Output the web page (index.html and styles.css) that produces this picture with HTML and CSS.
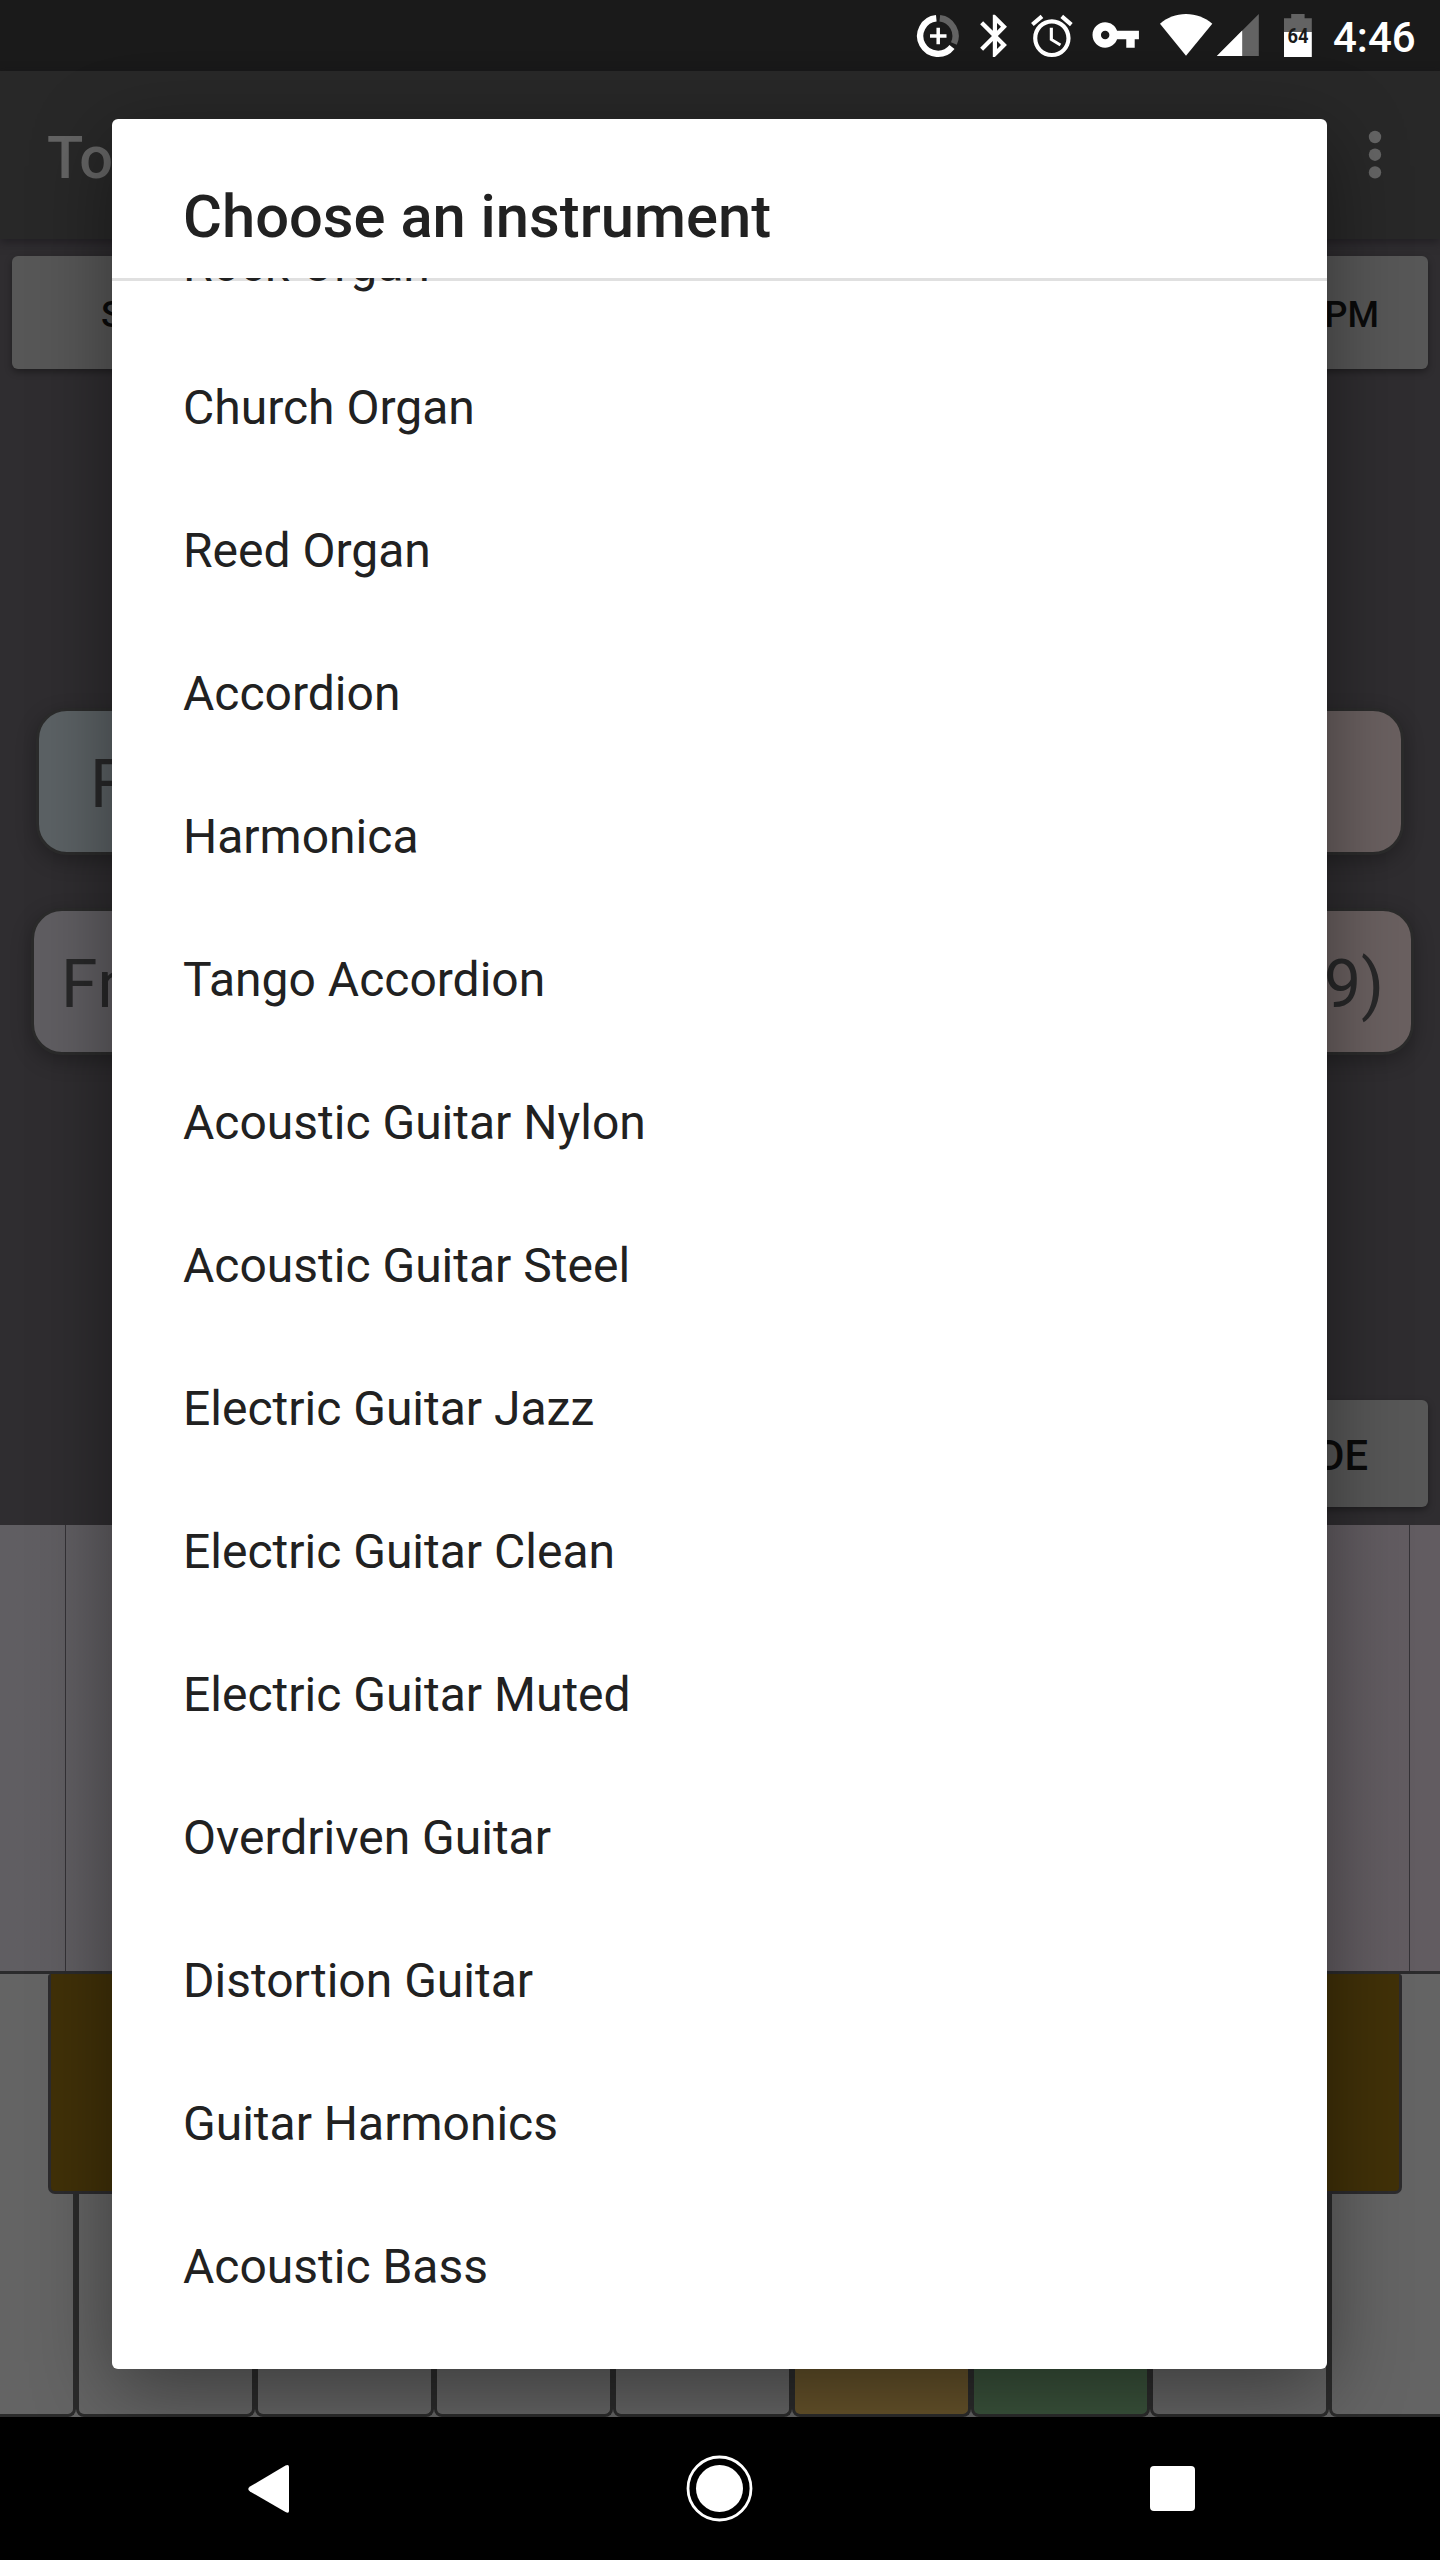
FILE: index.html
```html
<!DOCTYPE html>
<html lang="en">
<head>
<meta charset="utf-8">
<title>Choose an instrument</title>
<link rel="stylesheet" href="styles.css">
</head>
<body>
<div class="screen">
  <header class="status">
    <svg class="ic-data" width="44" height="71" viewBox="916 0 44 71"><g fill="none" stroke-width="6.400"><path stroke="#636363" d="M939.800 18.300A17.800 17.800 0 0 1 953.900 43.500"/><path stroke="#fff" d="M936.300 18.300A17.800 17.800 0 1 0 952 47"/><path stroke="#fff" stroke-width="3.500" d="M930 36h16.500M938.200 27.800v16.500"/></g></svg>
    <svg class="ic-bt" width="32" height="71" viewBox="978 0 32 71"><path fill="#fff" transform="translate(969.600 10.600) scale(2.110)" d="M17.710 7.710L12 2h-1v7.590L6.410 5 5 6.410 10.590 12 5 17.590 6.410 19 11 14.410V22h1l5.710-5.710-4.300-4.290 4.300-4.290zM13 5.830l1.880 1.880L13 9.590V5.830zm1.880 10.460L13 18.170v-3.760l1.880 1.880z"/></svg>
    <svg class="ic-alarm" width="44" height="71" viewBox="1030 0 44 71"><path fill="#fff" transform="translate(1026.900 10.900) scale(2.080 2.100)" d="M22 5.720l-4.600-3.860-1.290 1.530 4.600 3.860L22 5.720zM7.880 3.390L6.600 1.860 2 5.710l1.290 1.530 4.590-3.850zM12.500 8H11v6l4.750 2.850.75-1.230-4-2.370V8zM12 4c-4.970 0-9 4.030-9 9s4.020 9 9 9c4.970 0 9-4.030 9-9s-4.030-9-9-9zm0 16c-3.870 0-7-3.130-7-7s3.130-7 7-7 7 3.130 7 7-3.130 7-7 7z"/></svg>
    <svg class="ic-key" width="50" height="71" viewBox="1091 0 50 71"><path fill="#fff" transform="translate(1090.400 9.700) scale(2.110)" d="M12.650 10C11.830 7.670 9.610 6 7 6c-3.310 0-6 2.690-6 6s2.690 6 6 6c2.610 0 4.830-1.670 5.650-4H17v4h4v-4h2v-4H12.650zM7 14c-1.100 0-2-.9-2-2s.9-2 2-2 2 .9 2 2-.9 2-2 2z"/></svg>
    <svg class="ic-wifi" width="53" height="71" viewBox="1160 0 53 71"><path fill="#fff" d="M1186 55.700L1160 23.700C1167 17.500 1176 14 1186 14s19 3.500 26.300 9.700z"/></svg>
    <svg class="ic-cell" width="44" height="71" viewBox="1216 0 44 71"><path fill="#636363" d="M1258.800 14v42h-42z"/><path fill="#fff" d="M1242.200 30.600V56h-25.400z"/></svg>
    <svg class="ic-batt" width="28" height="71" viewBox="1284 0 28 71"><path fill="#636363" d="M1284 32V18.300h7.200V14h13.400v4.300h7.200V32z"/><path fill="#fff" d="M1284 32h27.800v25H1284z"/><text class="batt-text" x="1287.500" y="43.300" textLength="21" lengthAdjust="spacingAndGlyphs">64</text></svg>
    <span class="clock">4:46</span>
  </header>

  <div class="toolbar">
    <span class="app-title">To</span>
    <svg width="14" height="50" viewBox="0 0 14 50"><g fill="#646464"><circle cx="7" cy="7" r="6.200"/><circle cx="7" cy="24.700" r="6.200"/><circle cx="7" cy="42.400" r="6.200"/></g></svg>
  </div>

  <main class="stage">
    <div class="controls">
      <div class="btn btn-start">S</div>
      <div class="btn btn-tempo">BPM</div>
    </div>
    <div class="chords chords-a">
      <div class="chord blue">F</div>
      <div class="chord rose"></div>
    </div>
    <div class="chords chords-b">
      <div class="chord mauve">Fm</div>
      <div class="chord rose">(9)</div>
    </div>
    <div class="mode-row"><div class="btn btn-mode">MODE</div></div>
  </main>

  <section class="roll"><div class="beat"></div></section>

  <section class="keyboard">
    <div class="white-keys">
      <i class="key"></i><i class="key"></i><i class="key"></i><i class="key"></i><i class="key"></i><i class="key amber"></i><i class="key green"></i><i class="key"></i><i class="key"></i>
    </div>
    <div class="black-keys"><i class="black"></i><i class="black"></i></div>
  </section>

  <nav class="navbar">
    <svg width="42" height="50" viewBox="0 0 42 50"><path fill="#fff" d="M2 22.500L37.500 1.500Q41 0 41 3V47Q41 50 37.500 48L2 27.500Q-1.500 25 2 22.500z"/></svg>
    <svg width="68" height="68" viewBox="0 0 68 68"><circle cx="33.500" cy="33.500" r="31.500" fill="none" stroke="#fff" stroke-width="2.800"/><circle cx="33.500" cy="33.500" r="23.500" fill="#fff"/></svg>
    <svg width="46" height="46" viewBox="0 0 46 46"><rect x="0" y="0" width="45" height="45" rx="4" fill="#fff"/></svg>
  </nav>

  <div class="dialog">
    <h1 class="dialog-title">Choose an instrument</h1>
    <ul class="list">
      <li>Rock Organ</li>
      <li>Church Organ</li>
      <li>Reed Organ</li>
      <li>Accordion</li>
      <li>Harmonica</li>
      <li>Tango Accordion</li>
      <li>Acoustic Guitar Nylon</li>
      <li>Acoustic Guitar Steel</li>
      <li>Electric Guitar Jazz</li>
      <li>Electric Guitar Clean</li>
      <li>Electric Guitar Muted</li>
      <li>Overdriven Guitar</li>
      <li>Distortion Guitar</li>
      <li>Guitar Harmonics</li>
      <li>Acoustic Bass</li>
    </ul>
  </div>
</div>
</body>
</html>
```
FILE: styles.css
```css
* { box-sizing: border-box; }
body { margin: 0; background: #000; font-family: Roboto, "Liberation Sans", sans-serif; }
svg { display: block; flex: none; }

.screen {
  position: relative;
  width: 1440px;
  height: 2560px;
  overflow: hidden;
  display: flex;
  flex-direction: column;
}

/* Status bar */
.status {
  height: 71px;
  flex: none;
  display: flex;
  padding-left: 916px;
  background: #1a1a1a;
  color: #fff;
}
.ic-bt { margin-left: 18px; }
.ic-alarm { margin-left: 20px; }
.ic-key { margin-left: 17px; }
.ic-wifi { margin-left: 19px; }
.ic-cell { margin-left: 3px; }
.ic-batt { margin-left: 24px; }
.batt-text { font-size: 20.500px; font-weight: 700; fill: #1a1a1a; }
.clock { margin-left: 21px; font-size: 42px; font-weight: 500; line-height: 75px; }

/* Toolbar */
.toolbar {
  height: 168px;
  flex: none;
  display: flex;
  align-items: center;
  justify-content: space-between;
  padding: 0 58px 0 47px;
  background: #282828;
  box-shadow: 0 3px 9px rgba(20, 18, 24, .55);
  z-index: 1;
}
.app-title { font-size: 59.600px; font-weight: 500; color: #646464; padding-top: 6px; }

/* Stage */
.stage {
  height: 1286px;
  flex: none;
  display: flex;
  flex-direction: column;
  padding: 17px 12px 18px;
  background: #2f2d30;
}
.btn {
  display: flex;
  align-items: center;
  border-radius: 6px;
  background: #575757;
  color: #0a0a0a;
  font-weight: 500;
  padding-top: 4px;
  box-shadow: 0 3px 7px rgba(0, 0, 0, .35);
}
.controls { display: flex; gap: 12px; }
.controls .btn { flex: 1; height: 113px; padding-top: 5px; font-size: 36px; }
.btn-start { padding-left: 89px; }
.btn-tempo { justify-content: flex-end; padding-right: 49px; }
.chords { display: flex; gap: 60px; }
.chords-a { margin: 339px 24px 0 24px; }
.chords-b { margin: 53px 14px 0 19px; }
.chord {
  flex: 1;
  height: 147px;
  border: 3px solid #2b2b2b;
  border-radius: 31px;
  display: flex;
  align-items: center;
  font-size: 66px;
  color: #282829;
  box-shadow: 0 6px 20px rgba(0, 0, 0, .28);
}
.chords-a .chord { padding: 6px 0 0 51px; }
.chords-b .chord { padding: 6px 27px 0 27px; }
.chord.blue { background: #5c6265; }
.chord.mauve { background: #605e62; }
.chord.rose { background: #6a6060; justify-content: flex-end; }
.mode-row { margin-top: auto; display: flex; justify-content: flex-end; }
.btn-mode { width: 360px; height: 107px; justify-content: flex-end; padding-right: 60px; font-size: 41.700px; }

/* Note roll */
.roll {
  height: 446px;
  flex: none;
  display: flex;
  padding: 0 30px 0 65px;
  background: linear-gradient(90deg, #605e62, #625c61);
}
.beat { flex: 1; border: solid #343236; border-width: 0 1px; }

/* Piano keyboard */
.keyboard {
  position: relative;
  height: 446px;
  flex: none;
  background: #646464;
  border-top: 3px solid #2b2b2c;
  overflow: hidden;
}
.white-keys { display: flex; height: 443px; margin-left: -103px; }
.key {
  flex: none;
  width: 179px;
  border: 3px solid #2b2b2b;
  border-top: 0;
  border-radius: 0 0 8px 8px;
}
.amber { background: #65522a; }
.green { background: #3a523b; }
.black-keys {
  position: absolute;
  inset: 0 38px auto 48px;
  display: flex;
  justify-content: space-between;
}
.black {
  width: 110px;
  height: 220px;
  background: #413108;
  border: 3px solid #2c2b2d;
  border-top: 0;
  border-radius: 3px 3px 7px 7px;
}

/* Navigation bar */
.navbar {
  height: 143px;
  flex: none;
  display: flex;
  align-items: center;
  justify-content: space-between;
  padding: 0 244px 0 248px;
  background: #000;
  z-index: 3;
}

/* Dialog */
.dialog {
  position: absolute;
  left: 112px;
  top: 119px;
  z-index: 2;
  width: 1215px;
  height: 2250px;
  display: flex;
  flex-direction: column;
  border-radius: 6px;
  background: #fff;
  color: #212121;
  overflow: hidden;
  box-shadow: 0 20px 80px rgba(0, 0, 0, .42);
}
.dialog-title {
  margin: 0;
  height: 159px;
  flex: none;
  padding: 63px 71px 0;
  font-size: 59.700px;
  line-height: 70px;
  font-weight: 500;
}
.list {
  flex: 1;
  margin: 0;
  padding: 0;
  list-style: none;
  overflow: hidden;
  background: linear-gradient(#e0e0e0, #e0e0e0) top / 100% 3px no-repeat;
}
.list li {
  height: 143px;
  line-height: 143px;
  padding-left: 71px;
  font-size: 48px;
}
.list li:first-child { margin-top: -85px; }
```
